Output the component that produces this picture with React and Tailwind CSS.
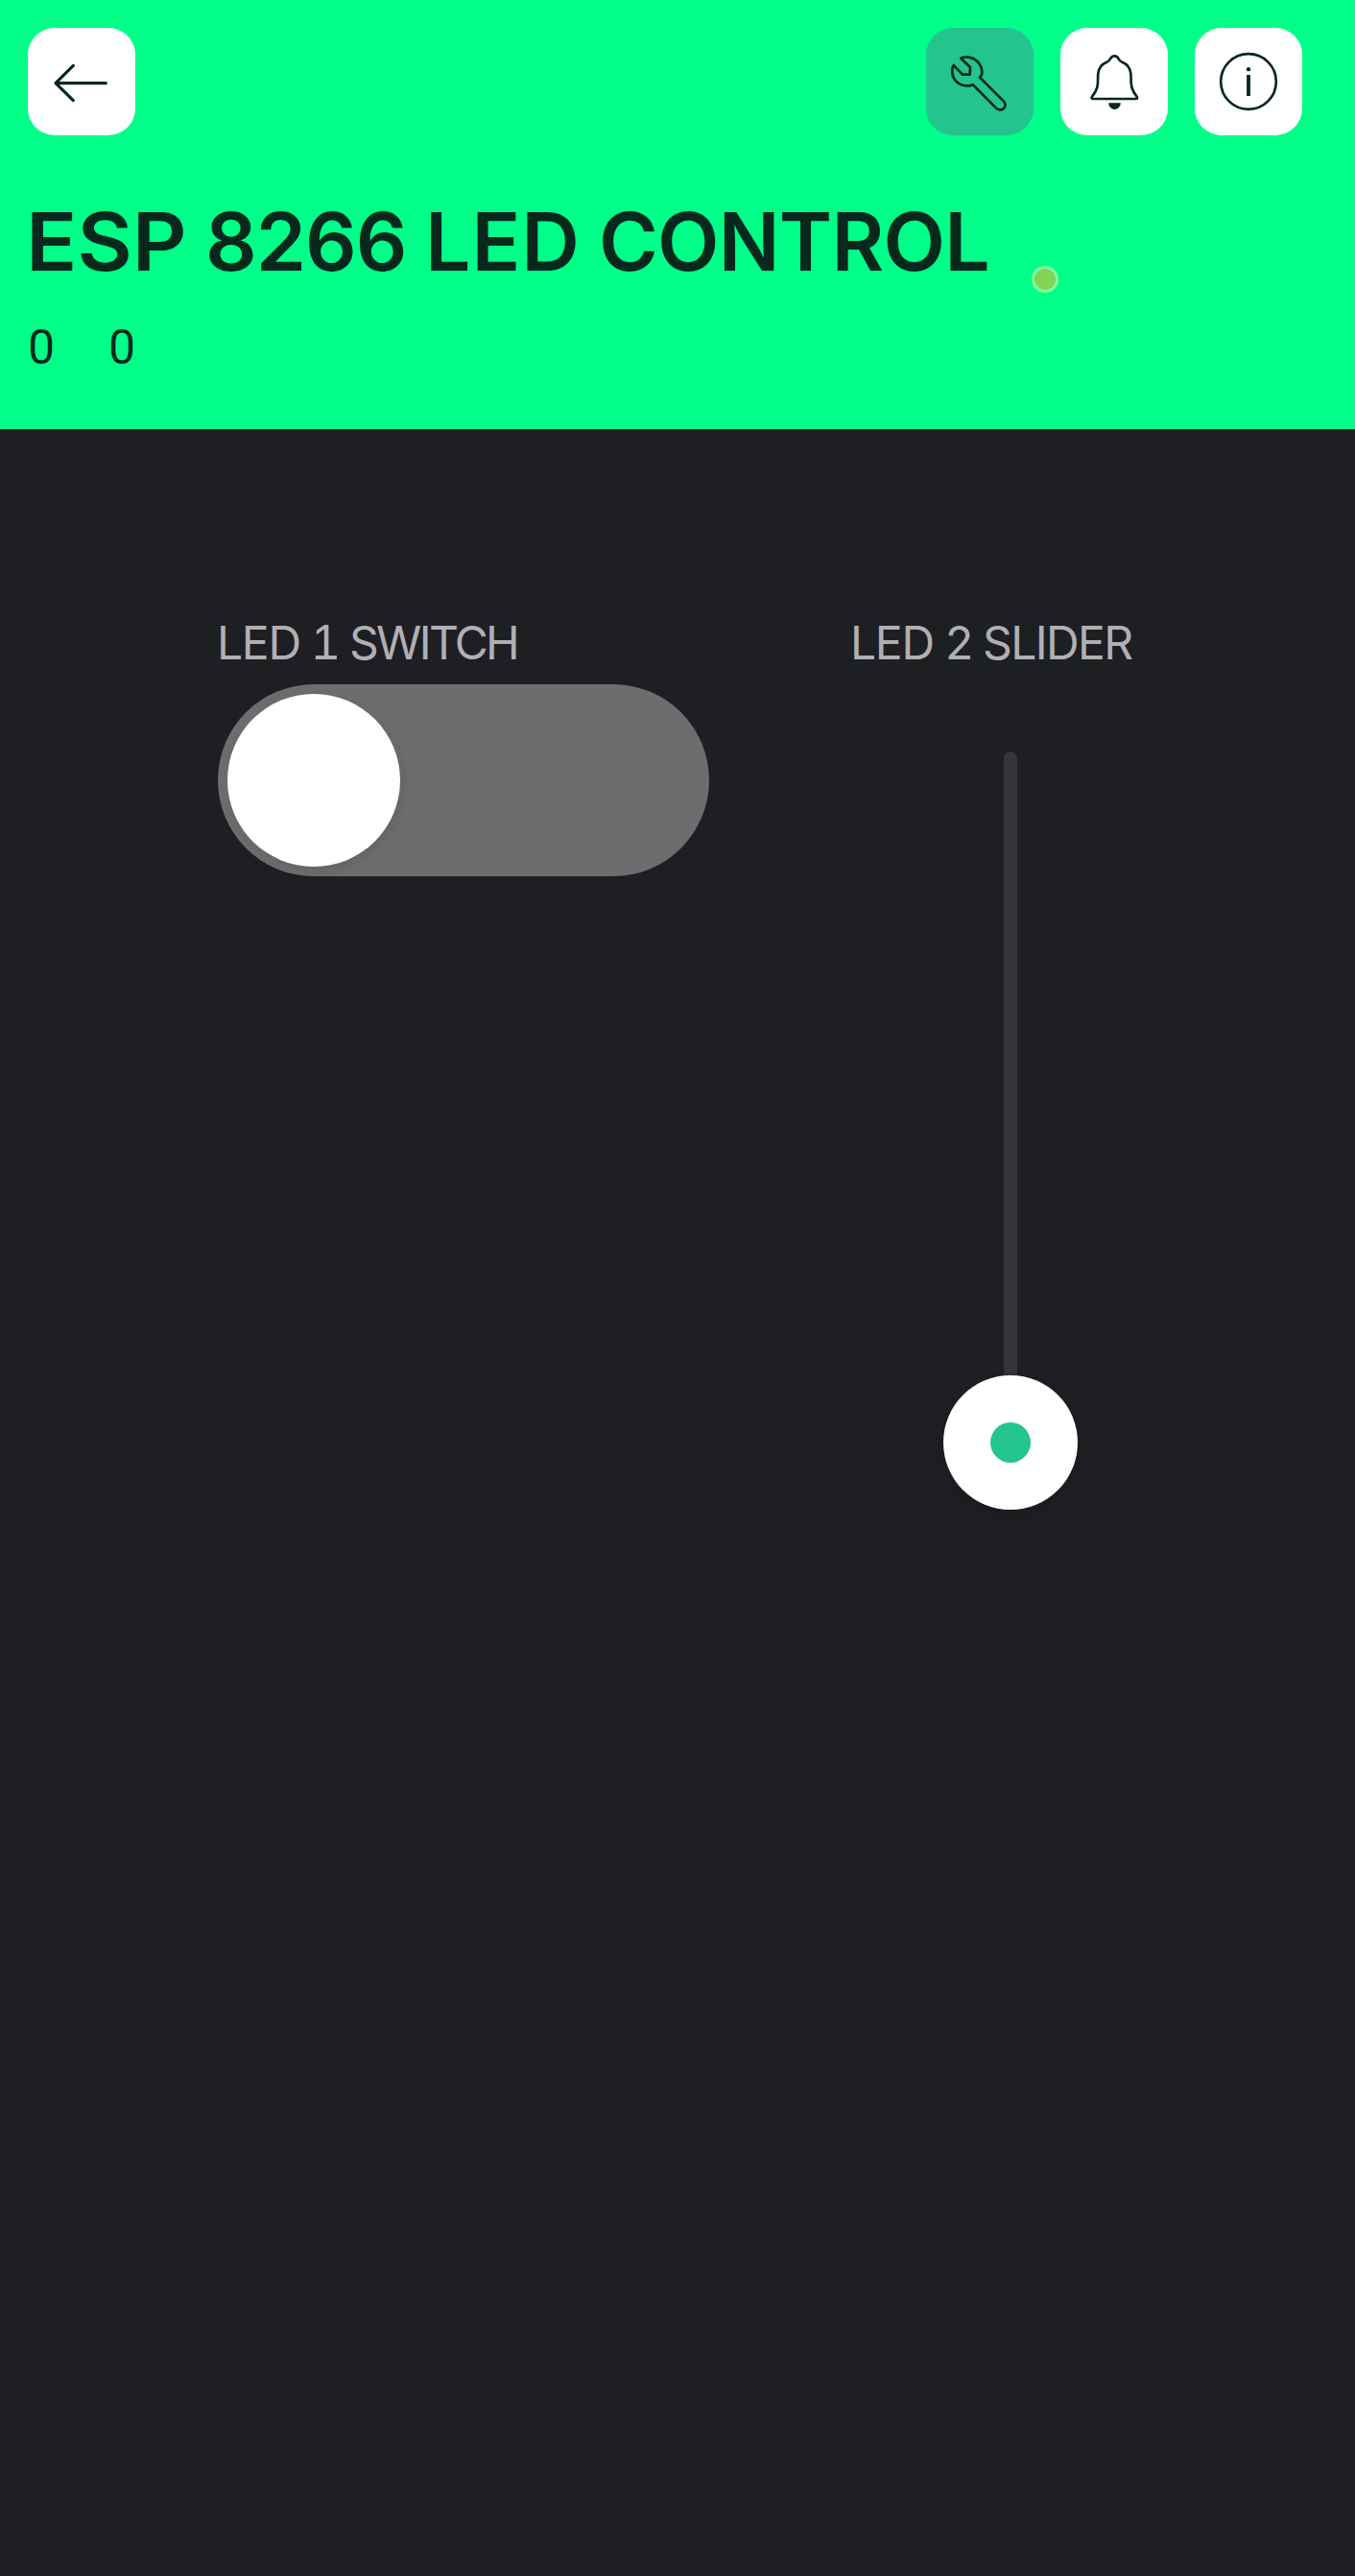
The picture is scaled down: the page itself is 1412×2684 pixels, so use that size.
function IconButton({ label, children, className = "bg-white" }) {
  return (
    <button aria-label={label} className={`size-28 rounded-[28px] ${className}`}>
      <svg
        viewBox="0 0 336 336"
        className="block size-28"
        fill="none"
        stroke="currentColor"
        strokeWidth="8"
        strokeLinecap="round"
        strokeLinejoin="round"
      >
        {children}
      </svg>
    </button>
  );
}

function Header() {
  return (
    <header className="h-[447px] bg-[#00ff88] pt-[29px] pl-[29px] pr-[55px] text-[#06281d]">
      <div className="flex justify-between">
        <IconButton label="Back">
          <path strokeWidth="9.5" d="M87 173H244M142 118L87 173L142 227" />
        </IconButton>
        <div className="flex gap-7">
          <IconButton label="Settings" className="bg-[#24c48e]">
            <path d="M86 117L114 146H137L138 123L109 95C116 91 126 91 134 92C163 97 179 124 174 146C173 150 170 153 168 155L243 230C257 246 236 265 219 251L147 178C138 182 128 182 119 180C94 176 81 155 82 134C82 127 83 121 86 117Z" />
          </IconButton>
          <IconButton label="Notifications">
            <path d="M169 88C163 88 159 91 156 97C153 104 152 105 145 107C130 113 120 125 118 142C116 158 119 170 115 186C111 199 106 207 99 215C96 218 98 222 102 222H236C240 222 242 218 239 215C232 207 227 199 223 186C219 170 222 158 220 142C218 125 208 113 193 107C186 105 185 104 182 97C179 91 175 88 169 88Z" />
            <path fill="currentColor" stroke="none" d="M151 235H188C188 247 180 255 169.500 255C159 255 151 247 151 235Z" />
          </IconButton>
          <IconButton label="Information">
            <circle cx="168" cy="168" r="86.500" />
            <circle cx="168" cy="129.500" r="6.500" fill="currentColor" stroke="none" />
            <path strokeWidth="11.500" strokeLinecap="butt" d="M168 147V213" />
          </IconButton>
        </div>
      </div>

      <div className="mt-[69px] flex h-[95px]">
        <h1 className="-ml-0.5 flex h-[84px] w-[1048px] whitespace-nowrap font-['Inter',sans-serif] text-[84px] leading-[84px] font-semibold">
          <span className="w-[187px] origin-left scale-x-[1.05]">ESP </span>
          <span className="w-[229px] tracking-[-1px]">8266 </span>
          <span className="w-[181px] tracking-[1px]">LED </span>
          <span className="tracking-[-0.8px]">CONTROL</span>
        </h1>
        <span className="mt-[67px] size-7 rounded-full border-[3px] border-[#86f79f] bg-[#82d455]" />
      </div>

      <div className="mt-[33px] flex gap-14 font-['Roboto',sans-serif] text-[50px] leading-[48px]">
        <span>0</span>
        <span>0</span>
      </div>
    </header>
  );
}

function WidgetLabel({ number, numberClass, name, nameClass }) {
  return (
    <div className="-ml-px flex h-12 whitespace-nowrap font-['Inter',sans-serif] text-[48px] leading-[48px] text-[#b0b0b2]">
      <span className="w-[99px] tracking-[-1.3px]">LED </span>
      <span className={`w-[39px] ${numberClass}`}>{number} </span>
      <span className={nameClass}>{name}</span>
    </div>
  );
}

export default function App() {
  return (
    <div className="min-h-[2684px] w-full bg-[#1e1f23]">
      <Header />
      <main className="flex pt-[199px] pl-[227px]">
        <section className="w-[660px]">
          <WidgetLabel
            number="1"
            numberClass="font-['Liberation_Sans'] text-[51px]"
            name="SWITCH"
            nameClass="tracking-[-2.7px]"
          />
          <div role="switch" aria-checked="false" className="mt-[19px] h-[200px] w-[512px] rounded-full bg-[#6c6d6f] p-2.5">
            <div className="size-[180px] rounded-full bg-white shadow-[3px_4px_12px_rgba(0,0,0,0.09)]" />
          </div>
        </section>
        <section>
          <WidgetLabel number="2" numberClass="" name="SLIDER" nameClass="tracking-[-1.6px]" />
          <div role="slider" aria-valuenow={0} className="mt-[89px] ml-24 flex w-[140px] flex-col items-center">
            <div className="h-[650px] w-3.5 rounded-t-full bg-[#343538]" />
            <div className="flex size-[140px] items-center justify-center rounded-full bg-white shadow-[0_5px_14px_rgba(0,0,0,0.15)]">
              <div className="size-[42px] rounded-full bg-[#24c48e]" />
            </div>
          </div>
        </section>
      </main>
    </div>
  );
}
